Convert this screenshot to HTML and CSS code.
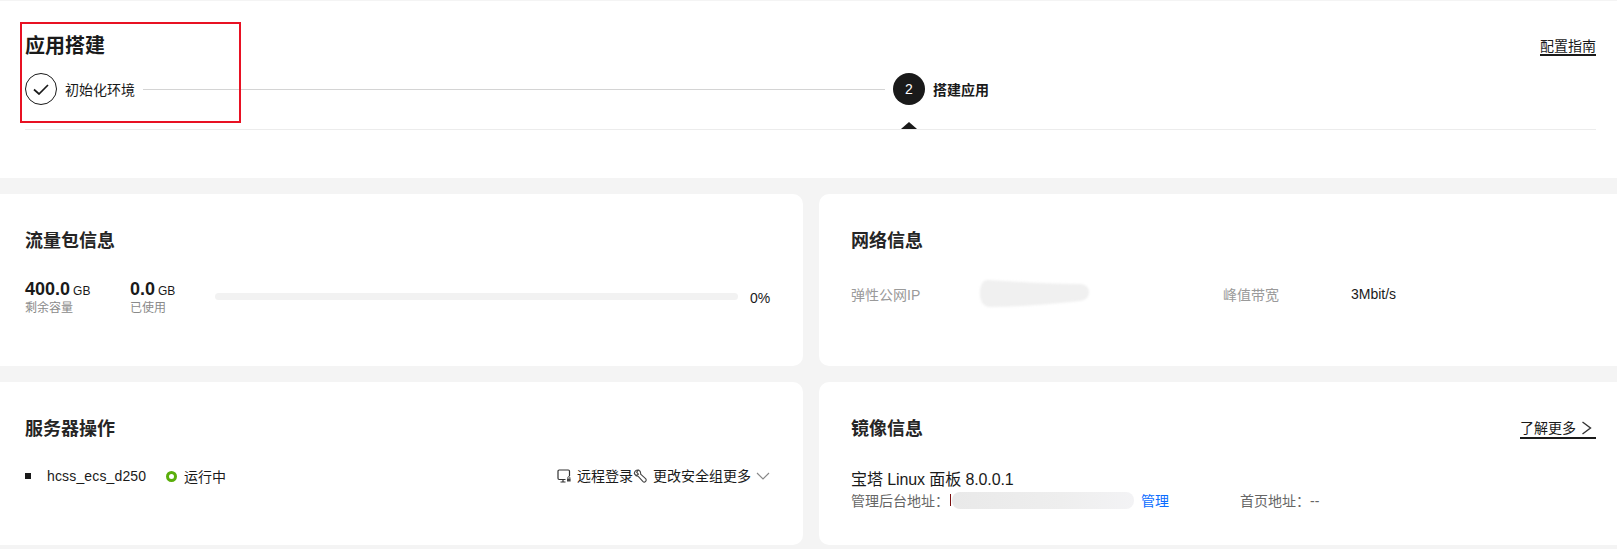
FILE: index.html
```html
<!DOCTYPE html>
<html lang="zh-CN">
<head>
<meta charset="utf-8">
<title>应用搭建</title>
<link rel="stylesheet" href="styles.css">
</head>
<body>
<section class="top">
  <div class="top-head">
    <h1 class="page-title">应用搭建</h1>
    <a class="guide">配置指南</a>
  </div>
  <div class="steps">
    <div class="step step-done">
      <span class="circle circle-done">
        <svg width="16" height="11" viewBox="0 0 16 11"><path d="M1 5.5 L6 10 L15 1" fill="none" stroke="#1a1a1a" stroke-width="1.7"/></svg>
      </span>
      <span class="step-label">初始化环境</span>
      <span class="step-line"></span>
    </div>
    <div class="step step-now">
      <span class="circle circle-now">2</span>
      <span class="step-label step-label-now">搭建应用</span>
      <span class="arrow"></span>
    </div>
  </div>
  <div class="annot"></div>
</section>
<main class="cards">
  <section class="card">
    <h2 class="card-title">流量包信息</h2>
    <div class="traffic">
      <div class="stat stat-left">
        <div><b class="num">400.0</b><span class="unit">GB</span></div>
        <div class="stat-label">剩余容量</div>
      </div>
      <div class="stat stat-used">
        <div><b class="num">0.0</b><span class="unit">GB</span></div>
        <div class="stat-label">已使用</div>
      </div>
      <div class="bar"></div>
      <span class="pct">0%</span>
    </div>
  </section>
  <section class="card card-right">
    <h2 class="card-title">网络信息</h2>
    <div class="net">
      <span class="net-label net-label-ip">弹性公网IP</span>
      <svg class="smear-ip" width="109" height="27" viewBox="0 0 109 27"><path d="M8 0 C40 2 70 4 100 4 C106 4 109 8 109 12 C109 17 106 20 100 21 C70 24 40 27 10 27 C4 27 0 22 0 14 C0 6 2 0 8 0Z" fill="#f0f0f0"/></svg>
      <span class="net-label net-label-bw">峰值带宽</span>
      <span class="net-value">3Mbit/s</span>
    </div>
  </section>
  <section class="card">
    <h2 class="card-title">服务器操作</h2>
    <div class="server">
      <span class="square"></span>
      <span class="host">hcss_ecs_d250</span>
      <span class="ring"></span>
      <span class="state">运行中</span>
      <span class="ops">
        <svg class="op-icon op-icon-first" width="14" height="14" viewBox="0 0 14 14"><path d="M8.5 10.5H2.2A1.2 1.2 0 0 1 1 9.3V2.2A1.2 1.2 0 0 1 2.2 1h9.1a1.2 1.2 0 0 1 1.2 1.2V7M6 10.5V13M3.5 13h5" fill="none" stroke="#333" stroke-width="1.2"/><rect x="10" y="9.5" width="3.6" height="3" fill="#444"/><path d="M10.8 9.5V8.6a1 1 0 0 1 2 0v.9" fill="none" stroke="#444"/></svg>
        <span class="op">远程登录</span>
        <svg class="op-icon" width="14" height="14" viewBox="0 0 14 14"><path d="M5.6 1 L3.6 3.2 L5.4 5.2 L3 6.6 L1.3 4.4 A4 4 0 0 1 5.6 1Z M5.6 1 A4 4 0 0 1 7.6 5.2 L12.6 9.6 A1.9 1.9 0 0 1 9.8 12.4 L5 7.2 A4 4 0 0 1 1.3 4.4" fill="none" stroke="#444" stroke-width="1.1" stroke-linejoin="round"/></svg>
        <span class="op op-sec">更改安全组</span><span class="op">更多</span>
        <svg class="op-chev" width="14" height="8" viewBox="0 0 14 8"><path d="M1 1 L7 7 L13 1" fill="none" stroke="#888" stroke-width="1.1"/></svg>
      </span>
    </div>
  </section>
  <section class="card card-right">
    <div class="image-head">
      <h2 class="card-title">镜像信息</h2>
      <a class="more">了解更多
        <svg width="11" height="14" viewBox="0 0 11 14"><path d="M1.5 1 L9.5 7 L1.5 13" fill="none" stroke="#333" stroke-width="1.4"/></svg>
      </a>
    </div>
    <div class="image-name">宝塔 Linux 面板 8.0.0.1</div>
    <div class="image-meta">
      <span class="meta-key">管理后台地址：</span>
      <span class="url-frag"></span>
      <span class="smear-url"></span>
      <a class="link">管理</a>
      <span class="home">首页地址：--</span>
    </div>
  </section>
</main>
</body>
</html>
```
FILE: styles.css
```css
* { box-sizing: border-box; }
html, body { margin: 0; }
body {
  padding-top: 1px;
  height: 549px;
  overflow: hidden;
  background: #f4f4f4;
  color: #1a1a1a;
  font-family: "Liberation Sans", "Noto Sans CJK SC", sans-serif;
  font-size: 14px;
}
.top {
  position: relative;
  height: 177px;
  padding: 34px 21px 0 25px;
  background: #fff;
}
.top-head { display: flex; justify-content: space-between; align-items: flex-start; height: 38px; }
.page-title { margin: 0; font-size: 20px; line-height: 22px; font-weight: 700; }
.guide {
  margin-top: 4px;
  height: 17px;
  font-size: 14px;
  line-height: 15px;
  border-bottom: 2px solid #1a1a1a;
}
.steps {
  position: relative;
  display: flex;
  height: 57px;
  border-bottom: 1px solid #ececec;
}
.step { display: flex; align-items: flex-start; }
.step-done { width: 868px; }
.step-now { position: relative; flex: 1; }
.circle {
  flex: none;
  display: flex;
  align-items: center;
  justify-content: center;
  width: 32px;
  height: 32px;
  border-radius: 50%;
}
.circle-done { border: 1px solid #1a1a1a; }
.circle-now { background: #1a1a1a; color: #fff; font-size: 14px; }
.step-label { margin-left: 8px; line-height: 35px; white-space: nowrap; }
.step-label-now { font-weight: 700; }
.step-line { flex: 1; height: 1px; margin: 16px 8px 0 8px; background: #d4d4d4; }
.arrow {
  position: absolute;
  left: 8px;
  bottom: 0;
  width: 0;
  height: 0;
  border-left: 8px solid transparent;
  border-right: 8px solid transparent;
  border-bottom: 7px solid #1a1a1a;
}
.annot {
  position: absolute;
  left: 20px;
  top: 21px;
  width: 221px;
  height: 101px;
  border: 2px solid #e81123;
}
.cards {
  display: grid;
  grid-template-columns: 803px 798px;
  grid-template-rows: 172px 163px;
  gap: 16px;
  margin-top: 16px;
}
.card {
  padding: 35px 21px 0 25px;
  background: #fff;
  border-radius: 0 10px 10px 0;
}
.card-right { padding-left: 32px; border-radius: 10px 0 0 10px; }
.card-title { margin: 0; font-size: 18px; line-height: 24px; font-weight: 700; color: #252525; }
.traffic { position: relative; display: flex; align-items: flex-start; margin-top: 25px; }
.stat { line-height: 1; }
.stat-left { width: 105px; }
.stat-used { width: 85px; }
.num { font-size: 18px; line-height: 22px; }
.unit { margin-left: 3px; font-size: 12px; }
.stat-label { margin-top: 0; font-size: 12px; line-height: 16px; color: #8a8a8a; }
.bar { flex: none; width: 523px; height: 7px; margin-top: 15px; border-radius: 4px; background: #f2f2f2; }
.pct { margin-left: 12px; margin-top: 12px; line-height: 16px; color: #1a1a1a; }
.net { display: flex; align-items: center; height: 27px; margin-top: 27px; }
.net-label { color: #9a9a9a; }
.net-label-ip { width: 129px; }
.net-label-bw { width: 128px; }
.smear-ip { flex: none; margin-right: 134px; filter: blur(1px); }
.server { position: relative; display: flex; align-items: center; height: 20px; margin-top: 25px; }
.square { width: 6px; height: 6px; background: #1a1a1a; }
.host { margin-left: 16px; width: 119px; letter-spacing: .15px; }
.ring { width: 11px; height: 11px; border: 3px solid #5aae0b; border-radius: 50%; }
.state { margin-left: 7px; }
.ops { display: flex; align-items: center; margin-left: auto; padding-right: 12px; }
.op { line-height: 20px; }
.op-icon { margin-right: 5px; }
.op-icon-first { margin-right: 6px; }
.op-sec { margin-left: 1px; }
.op-chev { margin-left: 5px; }
.image-head { display: flex; justify-content: space-between; align-items: flex-start; }
.more {
  display: flex;
  align-items: center;
  justify-content: space-between;
  width: 76px;
  height: 24px;
  margin-top: -2px;
  padding: 4px 4px 0 0;
  line-height: 18px;
  border-bottom: 2px solid #1a1a1a;
}
.image-name { margin-top: 29px; font-size: 16px; line-height: 20px; letter-spacing: -.1px; }
.image-meta { display: flex; align-items: center; height: 18px; margin-top: 1px; font-size: 14px; color: #666; }
.meta-key { width: 98px; flex: none; }
.url-frag { flex: none; width: 1px; height: 12px; margin: 0 1px; background: #7a1010; }
.smear-url {
  flex: none;
  width: 182px;
  height: 17px;
  border-radius: 8px;
  background: linear-gradient(90deg, #e9e9e9, #eeeeee 60%, #f3f3f5);
}
.link { margin-left: 7px; color: #0a6cff; }
.home { margin-left: 71px; }
```
